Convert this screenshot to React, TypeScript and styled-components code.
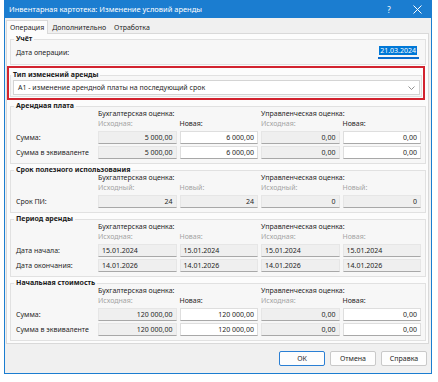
import styled, { createGlobalStyle } from "styled-components";

const GlobalStyle = createGlobalStyle`
  * { box-sizing: border-box; }
  html, body { margin: 0; padding: 0; background: #ffffff; }
  body {
    font-family: "Noto Sans", "Open Sans", sans-serif;
    font-size: 7px;
    color: #1f1f1f;
  }
`;

const Window = styled.div`
  width: 428px;
  height: 374px;
  margin-left: 4px;
  border: 1px solid #1b7dd0;
  border-top: 0;
  background: #f0f0f0;
  display: flex;
  flex-direction: column;
`;

const TitleBar = styled.div`
  height: 18px;
  flex: none;
  display: flex;
  align-items: center;
  background: #1b7dd0;
  color: #ffffff;
  padding-left: 4px;
`;

const Caption = styled.div`
  flex: 1;
  font-size: 7.5px;
`;

const TitleButton = styled.div`
  width: 28px;
  height: 18px;
  display: flex;
  align-items: center;
  justify-content: center;
  font-size: 8px;
`;

const TabStrip = styled.div`
  height: 15px;
  flex: none;
  display: flex;
  align-items: flex-end;
  padding-left: 1px;
`;

const Tab = styled.div<{ $active?: boolean }>`
  position: relative;
  z-index: 1;
  height: ${(p) => (p.$active ? "14px" : "13px")};
  margin-bottom: ${(p) => (p.$active ? "-1px" : "0")};
  padding: 0 3px;
  display: flex;
  align-items: center;
  background: ${(p) => (p.$active ? "#fcfcfc" : "transparent")};
  border: 1px solid ${(p) => (p.$active ? "#d9d9d9" : "transparent")};
  border-bottom: none;
`;

const Panel = styled.div`
  height: 311px;
  flex: none;
  margin: 0 2px 0 1px;
  padding-top: 2px;
  border: 1px solid #d9d9d9;
  background: #fcfcfc;
  display: flex;
  flex-direction: column;
  gap: 3px;
`;

const Group = styled.fieldset`
  margin: 0 2px 0 3px;
  padding: 0 4px 4px 5px;
  min-width: 0;
  border: 1px solid #e1e1e1;
  background: #f7f7f7;
`;

const Legend = styled.legend`
  margin-left: -2px;
  padding: 0 2px;
  font-weight: 700;
  line-height: 6px;
  color: #1a1a1a;
`;

const Highlight = styled.div`
  margin: -2px 3px 0 0;
  padding: 4px 0 1px 0;
  border: 2px solid #d2232f;
  ${Group} {
    margin: 0 1px;
    padding: 0 1px 1px 2px;
  }
`;

const DateRow = styled.div`
  height: 16px;
  margin-top: 2px;
  display: flex;
  align-items: center;
  justify-content: space-between;
  padding-right: 2px;
`;

const DateBox = styled.div`
  padding: 1px 2px 2px 1px;
  border-bottom: 2px solid #0c6ccc;
`;

const Selected = styled.span`
  background: #0078d7;
  color: #ffffff;
  padding: 0 1px;
`;

const Select = styled.div`
  height: 15px;
  margin-top: 2px;
  padding: 0 4px 0 4px;
  display: flex;
  align-items: center;
  justify-content: space-between;
  background: #ffffff;
  border: 1px solid #d4d4d4;
`;

const Grid = styled.div`
  display: grid;
  grid-template-columns: 79px repeat(4, 1fr);
  column-gap: 3px;
`;

const Heading = styled.div<{ $col: number; $muted?: boolean; $span?: number }>`
  grid-column: ${(p) => p.$col} / span ${(p) => p.$span ?? 1};
  height: 10px;
  line-height: 10px;
  white-space: nowrap;
  color: ${(p) => (p.$muted ? "#a3a3a3" : "#1f1f1f")};
`;

const RowLabel = styled.div`
  grid-column: 1;
  padding-top: 2px;
  display: flex;
  align-items: center;
  white-space: nowrap;
`;

const Field = styled.div<{ $editable?: boolean; $left?: boolean }>`
  height: 13px;
  margin-top: 2px;
  padding: 0 3px;
  display: flex;
  align-items: center;
  justify-content: ${(p) => (p.$left ? "flex-start" : "flex-end")};
  white-space: nowrap;
  background: ${(p) => (p.$editable ? "#ffffff" : "#efefef")};
  border: 1px solid ${(p) => (p.$editable ? "#dedede" : "#e6e6e6")};
  border-bottom-color: #a8a8a8;
`;

const Footer = styled.div`
  flex: 1;
  display: flex;
  align-items: center;
  justify-content: flex-end;
  gap: 5px;
  padding-right: 4px;
`;

const Button = styled.button<{ $default?: boolean }>`
  width: 46px;
  height: 15px;
  padding: 0;
  font: inherit;
  color: #1f1f1f;
  background: #fdfdfd;
  border: 1px solid ${(p) => (p.$default ? "#2a7fd4" : "#c9c9c9")};
  border-radius: 2px;
`;

type Cell = { value: string; editable?: boolean };
type Row = { label: string; cells: Cell[] };
type Section = {
  title: string;
  from: string;
  to: string;
  toMuted: boolean;
  left?: boolean;
  rows: Row[];
};

const sections: Section[] = [
  {
    title: "Арендная плата",
    from: "Исходная:",
    to: "Новая:",
    toMuted: false,
    rows: [
      { label: "Сумма:", cells: [{ value: "5 000,00" }, { value: "6 000,00", editable: true }, { value: "0,00" }, { value: "0,00", editable: true }] },
      { label: "Сумма в эквиваленте", cells: [{ value: "5 000,00" }, { value: "6 000,00", editable: true }, { value: "0,00" }, { value: "0,00", editable: true }] },
    ],
  },
  {
    title: "Срок полезного использования",
    from: "Исходный:",
    to: "Новый:",
    toMuted: true,
    rows: [{ label: "Срок ПИ:", cells: [{ value: "24" }, { value: "24" }, { value: "0" }, { value: "0" }] }],
  },
  {
    title: "Период аренды",
    from: "Исходная:",
    to: "Новая:",
    toMuted: true,
    left: true,
    rows: [
      { label: "Дата начала:", cells: [{ value: "15.01.2024" }, { value: "15.01.2024" }, { value: "15.01.2024" }, { value: "15.01.2024" }] },
      { label: "Дата окончания:", cells: [{ value: "14.01.2026" }, { value: "14.01.2026" }, { value: "14.01.2026" }, { value: "14.01.2026" }] },
    ],
  },
  {
    title: "Начальная стоимость",
    from: "Исходная:",
    to: "Новая:",
    toMuted: false,
    rows: [
      { label: "Сумма:", cells: [{ value: "120 000,00" }, { value: "120 000,00", editable: true }, { value: "0,00" }, { value: "0,00", editable: true }] },
      { label: "Сумма в эквиваленте", cells: [{ value: "120 000,00" }, { value: "120 000,00", editable: true }, { value: "0,00" }, { value: "0,00", editable: true }] },
    ],
  },
];

function Estimates({ section }: { section: Section }) {
  return (
    <Group>
      <Legend>{section.title}</Legend>
      <Grid>
        <Heading $col={2} $span={2}>Бухгалтерская оценка:</Heading>
        <Heading $col={4} $span={2}>Управленческая оценка:</Heading>
        <Heading $col={2} $muted>{section.from}</Heading>
        <Heading $col={3} $muted={section.toMuted}>{section.to}</Heading>
        <Heading $col={4} $muted>{section.from}</Heading>
        <Heading $col={5} $muted={section.toMuted}>{section.to}</Heading>
        {section.rows.map((row) => [
          <RowLabel key={row.label}>{row.label}</RowLabel>,
          ...row.cells.map((c, i) => (
            <Field key={row.label + i} $editable={c.editable} $left={section.left}>
              {c.value}
            </Field>
          )),
        ])}
      </Grid>
    </Group>
  );
}

export default function App() {
  return (
    <>
      <GlobalStyle />
      <Window>
        <TitleBar>
          <Caption>Инвентарная картотека: Изменение условий аренды</Caption>
          <TitleButton>?</TitleButton>
          <TitleButton>
            <svg width="9" height="9" viewBox="0 0 9 9">
              <path d="M0.5 0.5 L8.5 8.5 M8.5 0.5 L0.5 8.5" stroke="#fff" strokeWidth="1" />
            </svg>
          </TitleButton>
        </TitleBar>
        <TabStrip>
          <Tab $active>Операция</Tab>
          <Tab>Дополнительно</Tab>
          <Tab>Отработка</Tab>
        </TabStrip>
        <Panel>
          <Group>
            <Legend>Учёт</Legend>
            <DateRow>
              <span>Дата операции:</span>
              <DateBox>
                <Selected>21.03.2024</Selected>
              </DateBox>
            </DateRow>
          </Group>
          <Highlight>
            <Group>
              <Legend>Тип изменений аренды</Legend>
              <Select>
                <span>А1 - изменение арендной платы на последующий срок</span>
                <svg width="7" height="4" viewBox="0 0 7 4">
                  <path d="M0.5 0.5 L3.5 3.5 L6.5 0.5" fill="none" stroke="#777" strokeWidth="0.8" />
                </svg>
              </Select>
            </Group>
          </Highlight>
          {sections.map((s) => (
            <Estimates key={s.title} section={s} />
          ))}
        </Panel>
        <Footer>
          <Button $default>ОК</Button>
          <Button>Отмена</Button>
          <Button>Справка</Button>
        </Footer>
      </Window>
    </>
  );
}
